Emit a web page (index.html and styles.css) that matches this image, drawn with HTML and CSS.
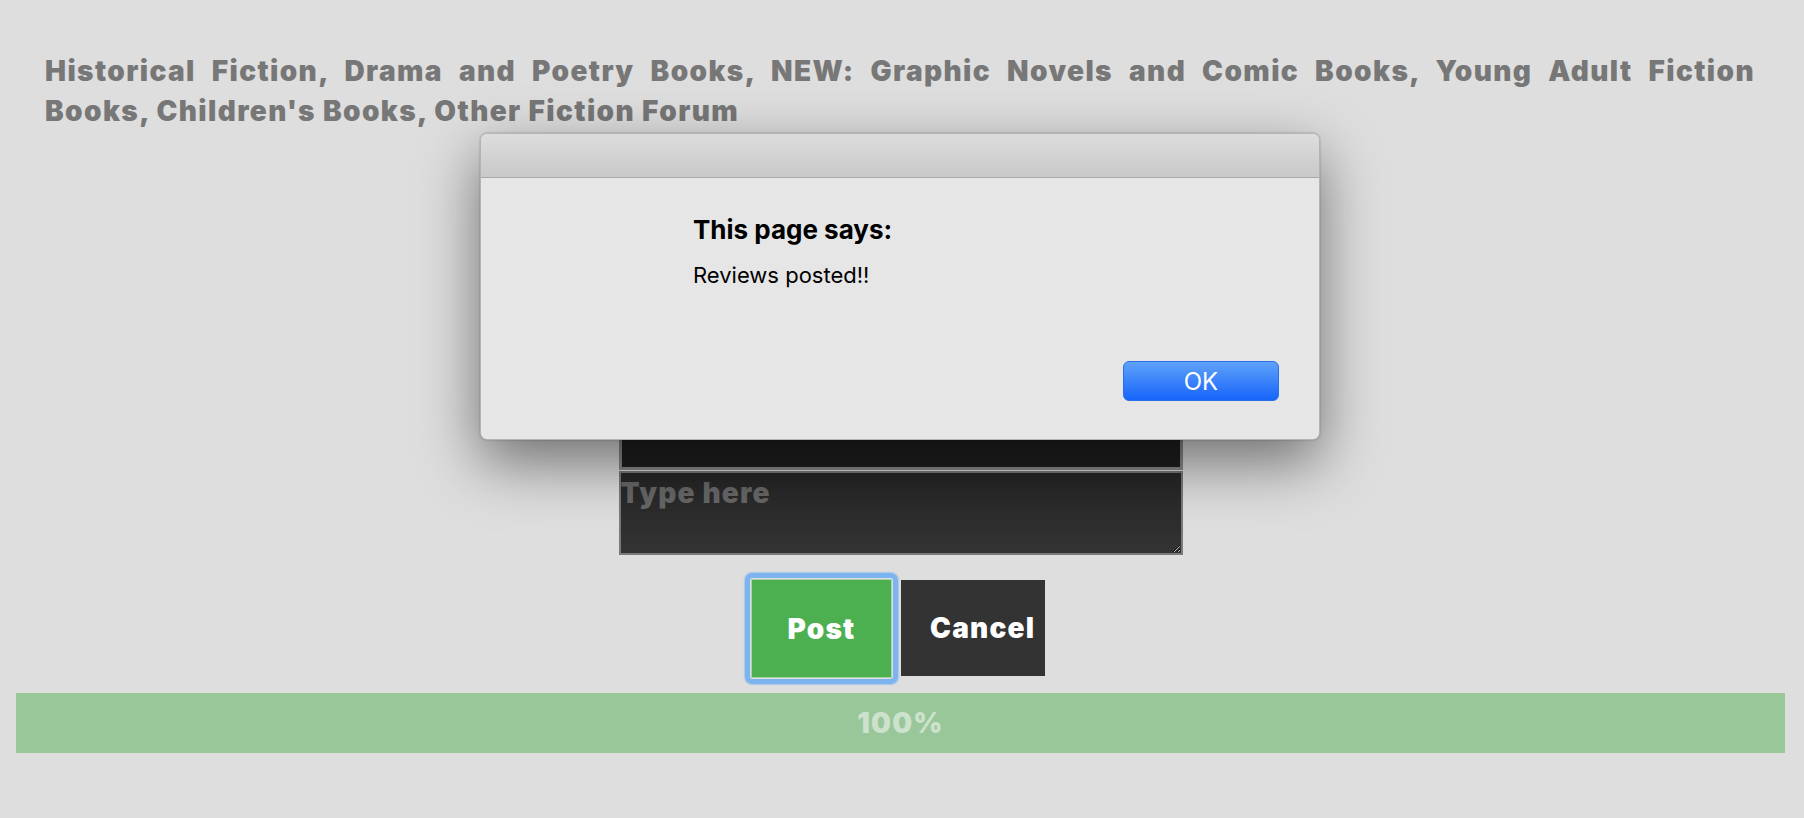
FILE: index.html
```html
<!DOCTYPE html>
<html lang="en">
<head>
<meta charset="utf-8">
<title>Other Fiction Forum</title>
<link rel="stylesheet" href="styles.css">
</head>
<body>
<main class="page">
  <h1 class="forum-title"><span class="forum-line">Historical Fiction, Drama and Poetry Books, NEW: Graphic Novels and Comic Books, Young Adult Fiction</span> Books, Children's Books, Other Fiction Forum</h1>
  <form class="review-form">
    <textarea class="box box-reviews" aria-label="Reviews"></textarea>
    <textarea class="box box-input" placeholder="Type here"></textarea>
    <div class="actions">
      <button type="button" class="btn btn-post">Post</button>
      <button type="button" class="btn btn-cancel">Cancel</button>
    </div>
  </form>
  <div class="progress"><span class="progress-label">100%</span></div>
</main>

<div class="alert" role="alertdialog">
  <div class="alert-titlebar"></div>
  <div class="alert-body">
    <div class="alert-text">
      <h2 class="alert-title">This page says:</h2>
      <p class="alert-message">Reviews posted!!</p>
    </div>
    <div class="alert-footer">
      <button type="button" class="alert-ok">OK</button>
    </div>
  </div>
</div>
</body>
</html>
```

FILE: styles.css
```css
html, body {
  margin: 0;
  padding: 0;
}

body {
  background: #dedede;
  width: 1804px;
  height: 818px;
  overflow: hidden;
  position: relative;
  font-family: "Arial Black", "Inter", "DejaVu Sans", sans-serif;
}

.page {
  padding: 0 19px 0 16px;
}

.forum-title {
  margin: 0;
  padding: 51px 30px 0 29px;
  font-family: "Arial Black", "Inter", "DejaVu Sans", sans-serif;
  font-weight: 900;
  font-size: 28px;
  line-height: 40px;
  letter-spacing: 1.4px;
  color: #777777;
  text-align: left;
}

.forum-line {
  display: block;
  text-align: justify;
  text-align-last: justify;
}

.review-form {
  display: flex;
  flex-direction: column;
  align-items: center;
  margin-top: 154px;
}

.box {
  display: block;
  box-sizing: border-box;
  width: 564px;
  margin: 0;
  padding: 0;
  font-family: "Arial Black", "Inter", "DejaVu Sans", sans-serif;
  font-weight: 900;
  font-size: 28px;
  letter-spacing: 1.2px;
  color: #cccccc;
  outline: none;
}

.box-reviews {
  height: 185px;
  border: 3px solid #8a8a8a;
  background: #1f1f1f;
  resize: none;
}

.box-input {
  height: 84px;
  margin-top: 1px;
  padding-top: 3px;
  border: 2px solid #7a7a7a;
  background: linear-gradient(#262626, #333333);
}

.box-input::placeholder {
  color: #676767;
  opacity: 1;
}

.actions {
  display: flex;
  align-items: flex-start;
  gap: 9px;
  margin-top: 24px;
  padding-right: 5px;
}

.btn {
  box-sizing: border-box;
  margin: 0;
  font-family: "Arial Black", "Inter", "DejaVu Sans", sans-serif;
  font-weight: 900;
  font-size: 28px;
  line-height: 34px;
  letter-spacing: 1.2px;
  color: #ffffff;
  cursor: pointer;
}

.btn-post {
  position: relative;
  width: 141px;
  height: 99px;
  border: 1px solid #a6d3a8;
  background: #4caf50;
  padding: 0;
  text-align: center;
}

.btn-post::after {
  content: "";
  position: absolute;
  inset: -7px;
  border: 5px solid #7cb4f0;
  border-radius: 7px;
  box-shadow: 0 0 1px 1px rgba(124, 180, 240, 0.5);
  pointer-events: none;
}

.btn-cancel {
  width: 144px;
  height: 96px;
  margin-top: 1px;
  border: 0;
  background: #333333;
  padding: 0 0 0 29px;
  text-align: left;
  white-space: nowrap;
}

.progress {
  display: flex;
  align-items: center;
  justify-content: center;
  height: 60px;
  margin-top: 15px;
  background: #99c799;
}

.progress-label {
  font-family: "Arial Black", "Inter", "DejaVu Sans", sans-serif;
  font-weight: 900;
  font-size: 28px;
  letter-spacing: 1.2px;
  color: #cde2cd;
}

/* alert dialog overlay */
.alert {
  position: absolute;
  left: 480px;
  top: 133px;
  width: 840px;
  height: 307px;
  box-sizing: border-box;
  display: flex;
  flex-direction: column;
  border: 1px solid #b4b4b4;
  border-radius: 7px;
  background: #e6e6e6;
  overflow: hidden;
  box-shadow: 0 22px 60px rgba(0, 0, 0, 0.5), 0 0 2px rgba(0, 0, 0, 0.3);
  font-family: "Inter", "Liberation Sans", sans-serif;
}

.alert-titlebar {
  height: 43px;
  border-bottom: 1px solid #a9a9a9;
  background: linear-gradient(#dddddd, #c9c9c9);
}

.alert-body {
  flex: 1;
  display: flex;
  flex-direction: column;
  justify-content: space-between;
  padding: 37px 40px 38px 212px;
}

.alert-title {
  margin: 0;
  font-size: 26px;
  font-weight: 700;
  line-height: 30px;
  color: #000000;
}

.alert-message {
  margin: 16px 0 0;
  font-size: 22px;
  font-weight: 400;
  line-height: 28px;
  color: #000000;
}

.alert-footer {
  display: flex;
  justify-content: flex-end;
}

.alert-ok {
  width: 156px;
  height: 40px;
  border: 1px solid #2a6fe8;
  border-radius: 6px;
  background: linear-gradient(#5fa2f9, #1764fb);
  color: #ffffff;
  font-family: "Inter", "Liberation Sans", sans-serif;
  font-size: 24px;
  font-weight: 400;
  padding: 0;
  cursor: pointer;
}
```
